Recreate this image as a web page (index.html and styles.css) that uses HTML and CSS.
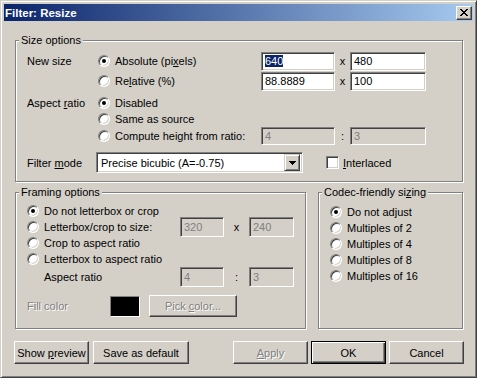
FILE: index.html
```html
<!DOCTYPE html>
<html lang="en">
<head>
    <meta charset="UTF-8">
    <meta name="viewport" content="width=device-width, initial-scale=1.0">
    <title>Filter: Resize</title>
    <link rel="stylesheet" href="styles.css">
</head>
<body>
    <div class="window">
        <div class="titlebar">
            <span class="title">Filter: Resize</span>
            <button class="close-btn" aria-label="Close">
                <svg width="8" height="7" viewBox="0 0 8 7" shape-rendering="crispEdges"><path d="M0 0h2v1H0zM6 0h2v1H6zM1 1h2v1H1zM5 1h2v1H5zM2 2h4v1H2zM3 3h2v1H3zM2 4h4v1H2zM1 5h2v1H1zM5 5h2v1H5zM0 6h2v1H0zM6 6h2v1H6z" fill="#000"/></svg>
            </button>
        </div>

        <div class="client">
            <fieldset class="group size-group">
                <legend>Size options</legend>

                <div class="size-rows">
                    <span class="field-label">New size</span>
                    <label class="radio"><span class="rb checked"></span><span>Absolute (pi<u>x</u>els)</span></label>
                    <span class="edit"><span class="sel">640</span></span>
                    <span class="sep">x</span>
                    <span class="edit">480</span>

                    <span></span>
                    <label class="radio"><span class="rb"></span><span>Re<u>l</u>ative (%)</span></label>
                    <span class="edit">88.8889</span>
                    <span class="sep">x</span>
                    <span class="edit">100</span>
                </div>

                <div class="aspect-rows">
                    <span class="field-label">Aspect <u>r</u>atio</span>
                    <label class="radio wide"><span class="rb checked"></span><span>Disabled</span></label>

                    <span></span>
                    <label class="radio wide"><span class="rb"></span><span>Same as source</span></label>

                    <span></span>
                    <label class="radio"><span class="rb"></span><span>Compute height from ratio:</span></label>
                    <span class="edit edit-short disabled">4</span>
                    <span class="sep">:</span>
                    <span class="edit edit-short disabled">3</span>
                </div>

                <div class="filter-row">
                    <span class="field-label">Filter <u>m</u>ode</span>
                    <div class="combo">
                        <span class="combo-text">Precise bicubic (A=-0.75)</span>
                        <span class="combo-btn">
                            <svg width="7" height="4" viewBox="0 0 7 4" shape-rendering="crispEdges"><path d="M0 0h7v1H0zM1 1h5v1H1zM2 2h3v1H2zM3 3h1v1H3z" fill="#000"/></svg>
                        </span>
                    </div>
                    <label class="check"><span class="cb"></span><span><u>I</u>nterlaced</span></label>
                </div>
            </fieldset>

            <div class="lower">
                <fieldset class="group framing-group">
                    <legend>Framing options</legend>

                    <div class="framing-rows">
                        <label class="radio full"><span class="rb checked"></span><span>Do not letterbox or crop</span></label>

                        <label class="radio"><span class="rb"></span><span>Letterbox/crop to size:</span></label>
                        <span class="edit edit-tall disabled">320</span>
                        <span class="sep">x</span>
                        <span class="edit edit-tall disabled">240</span>

                        <label class="radio full"><span class="rb"></span><span>Crop to aspect ratio</span></label>
                        <label class="radio full"><span class="rb"></span><span>Letterbox to aspect ratio</span></label>

                        <span class="field-label indent">Aspect ratio</span>
                        <span class="edit disabled">4</span>
                        <span class="sep">:</span>
                        <span class="edit disabled">3</span>
                    </div>

                    <div class="fill-row">
                        <span class="field-label disabled-text">Fill color</span>
                        <span class="swatch"></span>
                        <button class="btn btn-pick disabled-text">Pick <u>c</u>olor...</button>
                    </div>
                </fieldset>

                <fieldset class="group codec-group">
                    <legend>Codec-friendly si<u>z</u>ing</legend>
                    <label class="radio"><span class="rb checked"></span><span>Do not adjust</span></label>
                    <label class="radio"><span class="rb"></span><span>Multiples of 2</span></label>
                    <label class="radio"><span class="rb"></span><span>Multiples of 4</span></label>
                    <label class="radio"><span class="rb"></span><span>Multiples of 8</span></label>
                    <label class="radio"><span class="rb"></span><span>Multiples of 16</span></label>
                </fieldset>
            </div>

            <div class="button-row">
                <button class="btn">Show <u>p</u>review</button>
                <button class="btn btn-wide">Save as default</button>
                <button class="btn btn-apply disabled-text"><u>A</u>pply</button>
                <button class="btn btn-default">OK</button>
                <button class="btn">Cancel</button>
            </div>
        </div>
    </div>
</body>
</html>
```

FILE: styles.css
```css
body {
    margin: 0;
    background-color: #d4d0c8;
    font-family: "Liberation Sans", Arial, sans-serif;
    font-size: 11px;
    color: #000;
}

u {
    text-decoration: underline;
    text-underline-offset: 1px;
}

.window {
    width: 477px;
    height: 378px;
    box-sizing: border-box;
    padding: 3px;
    background-color: #d4d0c8;
    border: 1px solid;
    border-color: #d4d0c8 #404040 #404040 #d4d0c8;
    box-shadow: inset 1px 1px 0 #fff, inset -1px -1px 0 #808080;
}

/* title bar */
.titlebar {
    height: 17px;
    display: flex;
    align-items: center;
    justify-content: space-between;
    padding-left: 1px;
    background: linear-gradient(to right, #0a246a, #a6caf0);
}

.title {
    color: #fff;
    font-weight: bold;
    font-size: 11.5px;
}

.close-btn {
    width: 16px;
    height: 14px;
    margin-right: 1px;
    padding: 0;
    display: flex;
    align-items: center;
    justify-content: center;
    box-sizing: border-box;
    background-color: #d4d0c8;
    border: 1px solid;
    border-color: #fff #404040 #404040 #fff;
    box-shadow: inset -1px -1px 0 #808080;
}

.client {
    padding: 0 10px 0 11px;
}

/* group boxes */
.group {
    margin: 0;
    min-width: 0;
    border: 1px solid #808080;
    box-shadow: inset 1px 1px 0 #fff, 1px 1px 0 #fff;
}

.group legend {
    padding: 0 2px;
    margin-left: -8px;
    line-height: 13px;
    background-color: #d4d0c8;
}

.size-group {
    margin-top: 13px;
    padding: 4px 10px 8px 11px;
}

.field-label {
    white-space: nowrap;
}

.size-rows,
.aspect-rows {
    display: grid;
    grid-template-columns: 71px 163px 74px 15px 76px;
    align-items: center;
}

.size-rows {
    grid-template-rows: 20px 20px;
}

.aspect-rows {
    margin-top: 4px;
    grid-template-rows: 16px 16px 18px;
}

.aspect-rows .wide {
    grid-column: 2 / -1;
}

.sep {
    text-align: center;
}

.filter-row {
    margin-top: 7px;
    height: 21px;
    display: flex;
    align-items: center;
}

.filter-row .field-label {
    width: 70px;
}

/* controls */
.radio,
.check {
    display: flex;
    align-items: center;
    gap: 5px;
    white-space: nowrap;
}

.rb {
    position: relative;
    flex: none;
    width: 12px;
    height: 12px;
    box-sizing: border-box;
    border-radius: 50%;
    background-color: #fff;
    border: 1px solid;
    border-color: #808080 #fff #fff #808080;
    box-shadow: inset 1px 1px 0 #404040, inset -1px -1px 0 #d4d0c8;
}

.rb.checked::after {
    content: "";
    position: absolute;
    left: 3px;
    top: 3px;
    width: 4px;
    height: 4px;
    border-radius: 50%;
    background-color: #000;
}

.cb {
    flex: none;
    width: 13px;
    height: 13px;
    box-sizing: border-box;
    background-color: #fff;
    border: 1px solid;
    border-color: #808080 #fff #fff #808080;
    box-shadow: inset 1px 1px 0 #404040, inset -1px -1px 0 #d4d0c8;
}

.check {
    margin-left: 23px;
    gap: 4px;
}

.edit {
    height: 19px;
    box-sizing: border-box;
    display: flex;
    align-items: center;
    padding: 0 3px;
    background-color: #fff;
    border: 1px solid;
    border-color: #808080 #fff #fff #808080;
    box-shadow: inset 1px 1px 0 #404040, inset -1px -1px 0 #d4d0c8;
    white-space: nowrap;
}

.edit-short {
    height: 18px;
}

.edit.disabled {
    background-color: #d4d0c8;
    color: #808080;
}

.sel {
    background-color: #0a246a;
    color: #fff;
}

.combo {
    width: 207px;
    height: 21px;
    margin-left: -1px;
    box-sizing: border-box;
    display: flex;
    align-items: center;
    justify-content: space-between;
    padding: 2px 2px 2px 4px;
    background-color: #fff;
    border: 1px solid;
    border-color: #808080 #fff #fff #808080;
    box-shadow: inset 1px 1px 0 #404040, inset -1px -1px 0 #d4d0c8;
}

.combo-btn {
    width: 16px;
    height: 17px;
    box-sizing: border-box;
    display: flex;
    align-items: center;
    justify-content: center;
    background-color: #d4d0c8;
    border: 1px solid;
    border-color: #d4d0c8 #404040 #404040 #d4d0c8;
    box-shadow: inset 1px 1px 0 #fff, inset -1px -1px 0 #808080;
}

/* lower groups */
.lower {
    margin-top: 4px;
    display: flex;
    gap: 12px;
}

.framing-group {
    width: 291px;
    box-sizing: border-box;
    padding: 4px 8px 11px 11px;
}

.framing-rows {
    display: grid;
    grid-template-columns: 153px 44px 25px 45px;
    grid-template-rows: 16px 16px 16px 16px 20px;
    align-items: center;
}

.framing-rows .full {
    grid-column: 1 / -1;
}

.framing-rows .edit {
    height: 20px;
}

.framing-rows .edit-tall {
    margin: -2px 0;
}

.indent {
    padding-left: 17px;
}

.fill-row {
    margin-top: 8px;
    height: 22px;
    display: flex;
    align-items: center;
}

.fill-row .field-label {
    width: 83px;
}

.swatch {
    width: 30px;
    height: 21px;
    box-sizing: border-box;
    background-color: #000;
    border: 1px solid;
    border-color: #808080 #fff #fff #808080;
}

.disabled-text {
    color: #808080;
    text-shadow: 1px 1px 0 #fff;
}

.codec-group {
    flex: 1;
    box-sizing: border-box;
    padding: 5px 8px 8px 11px;
}

.codec-group .radio {
    height: 16px;
}

/* buttons */
.button-row {
    margin: 12px -1px 0;
    display: flex;
}

.btn {
    width: 75px;
    height: 23px;
    padding: 0;
    box-sizing: border-box;
    font-family: inherit;
    font-size: 11px;
    color: #000;
    background-color: #d4d0c8;
    border: 1px solid;
    border-color: #fff #404040 #404040 #fff;
    box-shadow: inset -1px -1px 0 #808080;
}

.btn.disabled-text {
    color: #808080;
}

.btn-wide {
    width: 96px;
    margin-left: 4px;
}

.btn-apply {
    margin-left: auto;
}

.btn-default {
    margin-left: 3px;
    border: 1px solid #000;
    box-shadow: inset 1px 1px 0 #fff, inset -1px -1px 0 #404040, inset -2px -2px 0 #808080;
}

.btn-default + .btn {
    margin-left: 3px;
}

.btn-pick {
    width: 88px;
    height: 22px;
    margin-left: 9px;
}
```
